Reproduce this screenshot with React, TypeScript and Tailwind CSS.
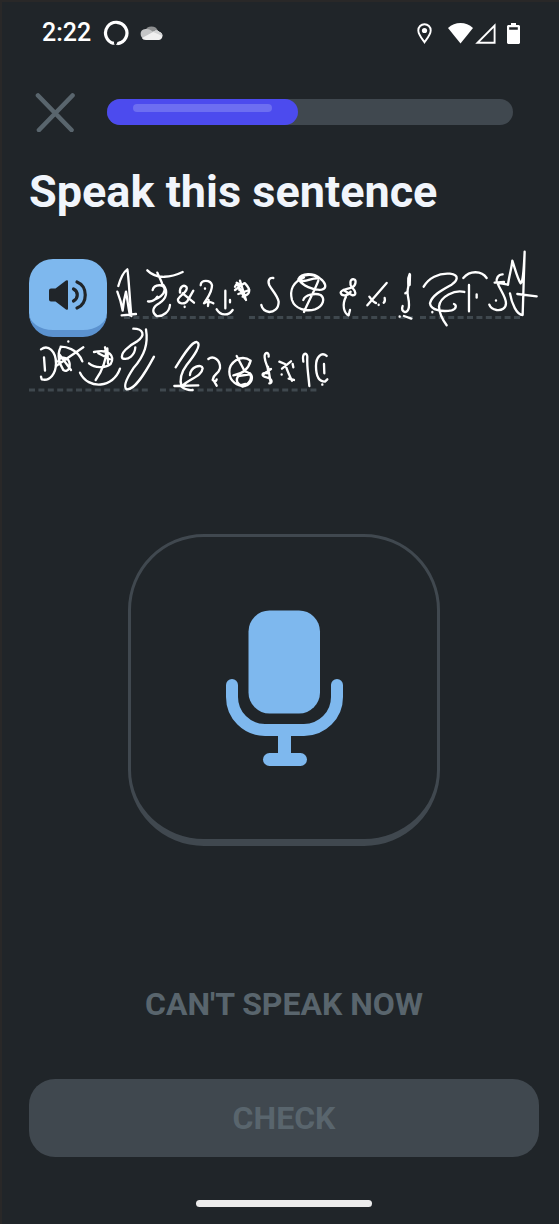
import type { ReactNode } from 'react'

const StatusBar = () => (
  <div className="flex h-[62px] items-center justify-between pl-[13px] pr-[19px] text-white">
    <div className="flex items-center">
      <span className="text-[25px] leading-8 font-medium">2:22</span>
      <svg className="ml-3 h-[26px] w-[26px]" viewBox="0 0 26 26" fill="none">
        <path d="M10.800 23.400A10.700 10.700 0 1 1 14.500 23.600" stroke="currentColor" strokeWidth="3.200" />
        <path d="M13 24.900c1-2.600 3.500-3.600 6-4.400l1 1.500c-2 2-4 2.900-7 2.900zM10.300 21.800l1.400 3-1.500-.2z" fill="currentColor" />
      </svg>
      <svg className="ml-[11px] h-4 w-[23px]" viewBox="0 0 23 16">
        <path d="M5 6a7 7 0 0 1 13 0l-6 5z" fill="#8d8f90" />
        <path d="M5.500 4C8 3.600 10 4.500 12 6l3 2-11 6.500C-.500 12-1 4.500 5.500 4z" fill="#c4c5c6" />
        <path d="M13 7c2-2 5-2 6.500 0 4 1 4 7.500-.5 8H6c-2 0-3.500-1-4-2z" fill="#f0f0f0" />
        <path d="M13 7c2-2 5-2 6.500 0 2 .5 3 2 3 4z" fill="#d4d5d6" />
      </svg>
    </div>
    <div className="flex items-center">
      <svg className="h-[21px] w-[15px]" viewBox="0 0 15 21" fill="none">
        <path d="M7.500 1.200C4 1.200 1.300 4 1.300 7.400c0 4 4 8.600 6.200 11.800 2.200-3.200 6.200-7.800 6.200-11.800 0-3.400-2.700-6.200-6.200-6.200z" stroke="currentColor" strokeWidth="1.900" />
        <circle cx="7.500" cy="7.500" r="2.600" fill="currentColor" />
      </svg>
      <svg className="ml-4 h-[21px] w-[25px]" viewBox="0 0 25 21">
        <path d="M0 5C7-1.600 18-1.600 25 5L12.500 20.500z" fill="currentColor" />
      </svg>
      <svg className="ml-[2px] h-[21px] w-[21px]" viewBox="0 0 21 21" fill="none">
        <path d="M2.500 19.800H19.600V2.600z" stroke="currentColor" strokeWidth="1.900" />
      </svg>
      <svg className="ml-[11px] h-[21px] w-[13px]" viewBox="0 0 13 21">
        <path d="M4 0h5v2h3l1 1v17l-1 1H1l-1-1V3l1-1h3zM2.200 4.200v2.600h8.600V4.200z" fill="currentColor" fillRule="evenodd" />
      </svg>
    </div>
  </div>
)

// Each group is drawn on a grid three times finer than the line it sits on
const Strokes = ({ x, children }: { x: number; children: ReactNode }) => (
  <g
    transform={`translate(${x} 240) scale(0.3333)`}
    fill="none"
    stroke="#fff"
    strokeWidth="7"
    strokeLinecap="round"
    strokeLinejoin="round"
  >
    {children}
  </g>
)

const FirstLine = () => (
  <svg className="min-w-0 flex-1 overflow-visible" viewBox="107 259 432 78" role="img" aria-label="Sentence, first line">
    <path d="M124 317.500H234M249 317.500H413M420 317.500H521" stroke="#3f484e" strokeWidth="3" strokeDasharray="6 3.400" />
    <Strokes x={20}>
      <path d="M295 138C300 120 308 98 322 88C326 110 328 160 334 228M292 155C300 175 305 195 308 212C310 190 314 170 318 155C322 175 324 200 330 226M305 226L348 222" />
      <path d="M382 91C410 120 455 112 488 96M412 98C418 112 424 122 428 135M398 150C402 132 435 130 434 150C432 165 415 175 405 178M430 135C445 155 440 175 418 190C400 200 392 215 410 228C430 230 448 215 450 195M384 184C395 186 405 180 412 170" />
      <path d="M480 158C478 140 492 132 500 142C505 155 480 165 474 178C472 192 495 195 503 182L520 152M488 160L522 188M494 200v1" />
    </Strokes>
    <Strokes x={190}>
      <path d="M32 136C32 118 62 118 66 136C66 160 52 172 42 190C52 184 60 184 70 190M56 180L54 198M45 145v1" />
      <path d="M106 152V205M120 180V187M80 208C92 228 116 228 128 210" />
      <path d="M135 140C145 120 150 135 148 150M150 122L168 180M140 128L165 176M135 150L162 130M145 162L178 150M165 130C185 150 180 165 158 170" />
      <path d="M250 114C238 112 232 122 238 136C245 150 262 165 266 185C266 208 250 216 238 216C225 214 216 205 214 195" />
      <path d="M342 112C310 125 298 150 306 180C315 208 350 215 375 208C402 198 405 175 392 165C375 158 345 165 340 180M325 118C335 98 370 98 390 115C408 128 412 145 395 149C370 152 335 135 328 120M332 122C350 128 365 112 385 115M385 122C375 150 355 185 342 216M335 110C350 102 370 104 380 110" />
      <path d="M492 118C478 115 480 135 485 142C498 140 500 118 492 118M486 142C470 148 452 148 452 158C455 170 475 168 482 155M486 142C498 155 500 165 488 166C478 162 470 155 460 150M468 170C455 195 462 220 476 226L480 210" />
    </Strokes>
    <Strokes x={360}>
      <path d="M80 129L22 196M28 170C35 180 42 188 48 189M56 194v1M74 174C76 182 74 186 71 188" />
      <path d="M149 102C138 125 150 125 143 150C140 165 148 175 147 195C147 215 135 222 127 210C126 205 127 200 128 198M136 160L142 156M150 104L149 135M119 229v1M132 228L154 236" />
      <path d="M191 140C205 115 235 98 270 101C300 105 292 122 275 134C250 148 215 165 210 190C212 212 250 216 275 211C290 207 290 195 282 192M313 156C285 148 240 170 237 200C238 220 248 240 260 256M217 216v1" />
      <path d="M310 114C330 90 365 92 380 114M327 135V214M350 163V173" />
      <path d="M428 103C415 102 408 115 410 128L444 134M404 128L432 126M412 128C420 150 438 170 438 190C438 205 425 212 410 210C398 208 390 200 388 194M408 181v1" />
      <path d="M444 134C448 105 456 80 457 62C465 85 472 115 482 130C490 125 492 80 494 35L488 225C470 225 455 190 450 160M472 162L530 169" />
    </Strokes>
  </svg>
)

const SecondLine = () => (
  <svg className="block w-full overflow-visible" viewBox="29 337 510 56" role="img" aria-label="Sentence, second line">
    <path d="M29 390H148M160 390H317" stroke="#3f484e" strokeWidth="3" strokeDasharray="6 3.400" />
    <Strokes x={20}>
      <path d="M72 352L75 392M63 328C85 312 108 335 108 370C108 400 90 425 65 418L63 410" />
      <path d="M190 322L108 378M122 320C135 320 172 325 187 364M122 322C110 345 118 372 130 390C145 400 155 378 145 360C138 350 118 350 114 365M116 340L153 390M145 304v1" />
      <path d="M222 336C270 325 285 350 272 372C255 385 225 385 207 370M255 322C265 350 245 395 227 420M235 340L270 358M262 325L264 370M180 398C205 450 280 445 300 386" />
      <path d="M340 266C368 266 380 285 350 305C325 318 300 340 307 355C325 362 345 345 346 322M378 268C385 310 375 345 340 385C320 415 308 440 320 448C345 450 375 400 402 350" />
      <path d="M467 382C490 345 515 305 530 306C548 312 520 350 500 375C485 395 478 420 485 440M463 438L535 436M510 405C512 380 545 370 548 385C545 410 510 415 484 440C495 448 508 452 518 450" />
    </Strokes>
    <Strokes x={190}>
      <path d="M55 357C70 345 92 360 90 385C85 405 70 400 68 420C75 425 78 425 80 418M70 420L80 437" />
      <path d="M182 362C150 340 118 370 118 395C118 425 145 440 165 438C188 430 190 410 180 400M140 348L164 394M182 362C176 385 158 402 130 406M165 394C190 400 190 425 158 440C140 430 136 420 145 408L180 403M150 436L166 432" />
      <path d="M236 350C238 335 222 335 224 352C226 375 240 385 232 400C215 395 212 408 230 412C248 415 248 430 238 430M234 380L242 428M220 403L243 387" />
      <path d="M268 365L285 372C292 392 298 408 306 422M303 364L276 386M308 372L310 382M275 403v1M296 416L312 420" />
      <path d="M340 365C335 335 352 338 352 350C350 380 355 400 358 438" />
      <path d="M410 348C395 335 378 350 378 378C378 405 385 425 405 425L412 418M402 372L403 400M397 433v1" />
    </Strokes>
  </svg>
)

export default function App() {
  return (
    <div className="flex min-h-screen flex-col border-t-2 border-l-2 border-[#292828] bg-[#202529] pr-5 pl-[27px] font-['Roboto','Liberation_Sans',sans-serif]">
      <StatusBar />

      <header className="mt-7 mr-[26px] flex h-10 items-center gap-[26px]">
        <button type="button" aria-label="Close" className="flex h-10 w-[52px] items-center justify-center text-[#59656d]">
          <svg className="h-10 w-10" viewBox="0 0 40 40" fill="none" stroke="currentColor" strokeWidth="4.600" strokeLinecap="round">
            <path d="M3 3.500L36.500 38M37.500 3.500L4 38" />
          </svg>
        </button>
        <div
          role="progressbar"
          aria-label="Lesson progress"
          aria-valuenow={47}
          aria-valuemin={0}
          aria-valuemax={100}
          className="h-[26px] flex-1 rounded-full bg-[#40484f]"
        >
          <div className="h-full w-[47%] rounded-full bg-[#4c4bee] px-[26px] pt-[5px]">
            <div className="h-2 rounded-full bg-[#6d6ef1]" />
          </div>
        </div>
      </header>

      <main className="flex flex-1 flex-col">
        <h1 className="mt-9 text-[45px] leading-12 font-bold text-[#f1f5fb]">Speak this sentence</h1>

        <section className="mt-[43px]">
          <div className="flex">
            <button
              type="button"
              aria-label="Play sentence"
              className="flex h-[78px] w-[78px] shrink-0 items-center justify-center rounded-3xl border-b-[7px] border-[#5b92cf] bg-[#7eb8ee] text-[#202529]"
            >
              <svg className="h-8 w-10" viewBox="0 0 40 32" fill="none">
                <path d="M3 9.500h4.500L18 1.500q2-1 2 1v27q0 2-2 1L7.500 22.500H3q-2 0-2-2v-9q0-2 2-2z" fill="currentColor" />
                <path d="M25.500 10c5 2.500 5 9.500 0 12M29 3c11 4 11 22 0 26" stroke="currentColor" strokeWidth="3.200" strokeLinecap="round" />
              </svg>
            </button>
            <FirstLine />
          </div>
          <SecondLine />
        </section>

        <div className="flex flex-1 items-center justify-center">
          <button
            type="button"
            aria-label="Tap to speak"
            className="flex h-[312px] w-[312px] items-center justify-center rounded-[76px] border-[3px] border-b-[7px] border-[#40484f] text-[#7eb8ee]"
          >
            <svg className="h-[156px] w-[117px]" viewBox="0 0 117 156" fill="none" stroke="currentColor">
              <rect x="22.500" y="0.500" width="71.500" height="103" rx="21" fill="currentColor" stroke="none" />
              <path d="M6 75V87A33 33 0 0 0 39 120H78A33 33 0 0 0 111 87V75" strokeWidth="12" strokeLinecap="round" />
              <path d="M58.500 120V148" strokeWidth="13" />
              <path d="M43.500 149.500H74.500" strokeWidth="13" strokeLinecap="round" />
            </svg>
          </button>
        </div>
      </main>

      <footer className="flex flex-col items-center">
        <button type="button" className="text-[32px] leading-[34px] font-bold text-[#59656d]">
          CAN'T SPEAK NOW
        </button>
        <button
          type="button"
          disabled
          className="mt-[58px] h-[78px] w-full rounded-[26px] bg-[#40484f] text-[32px] leading-[34px] font-bold text-[#59656d]"
        >
          CHECK
        </button>
        <div className="mt-[43px] mb-[17px] h-[7px] w-44 rounded-full bg-[#ececec]" />
      </footer>
    </div>
  )
}
